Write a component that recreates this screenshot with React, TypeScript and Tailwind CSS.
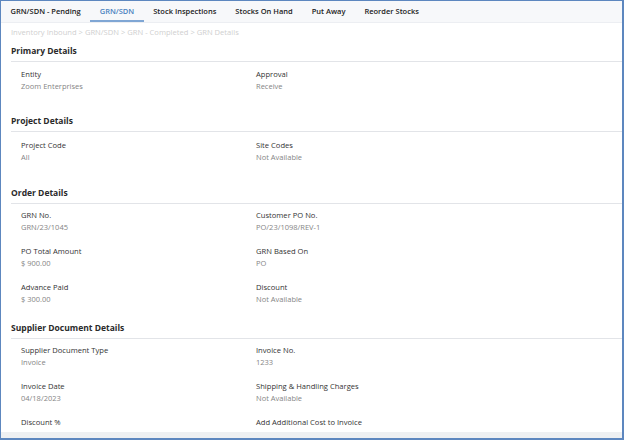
import React from "react";

const tabs = ["GRN/SDN - Pending", "GRN/SDN", "Stock Inspections", "Stocks On Hand", "Put Away", "Reorder Stocks"];

type Field = [string, string];

function Row({ left, right }: { left: Field; right: Field }) {
  return (
    <div className="grid grid-cols-[235px_1fr] pl-[10px]">
      {[left, right].map(([label, value]) => (
        <div key={label} className="flex flex-col">
          <span className="text-[7.6px] leading-[12px] text-[#333]">{label}</span>
          <span className="text-[7.5px] leading-[13px] text-[#858585]">{value}</span>
        </div>
      ))}
    </div>
  );
}

function Section({
  title,
  mt,
  rowsMt,
  rows,
}: {
  title: string;
  mt: string;
  rowsMt: string;
  rows: [Field, Field][];
}) {
  return (
    <div className={mt}>
      <div className="border-b border-[#e2e4e8] pb-[4px] text-[8.5px] font-bold leading-[12px] text-[#2a2a2a]">
        {title}
      </div>
      <div className={`flex flex-col gap-y-[11px] ${rowsMt}`}>
        {rows.map(([l, r]) => (
          <Row key={l[0]} left={l} right={r} />
        ))}
      </div>
    </div>
  );
}

export default function App() {
  return (
    <div className="h-[440px] w-[626px] bg-white font-['Open_Sans',sans-serif]">
      <div className="flex h-[440px] w-[624px] flex-col overflow-hidden border-b-2 border-l border-r-2 border-t border-[#5d87bf]">
        <div className="flex h-[22px] shrink-0 items-stretch border-b border-[#eceef2] bg-[#f7f8fa]">
          {tabs.map((t) => (
            <div
              key={t}
              className={
                t === "GRN/SDN"
                  ? "flex items-center border-b-2 border-[#7fa6d4] px-[9.5px] pt-[2px] text-[7.5px] font-semibold text-[#4a82c0]"
                  : "flex items-center px-[9.5px] text-[7.5px] font-semibold text-[#222]"
              }
            >
              {t}
            </div>
          ))}
        </div>
        <div className="flex-1 overflow-hidden pl-[10px]">
          <div className="mt-[3px] text-[7.6px] leading-[12px] text-[#cfcfcf]">
            Inventory Inbound &gt; GRN/SDN &gt; GRN - Completed &gt; GRN Details
          </div>
          <Section
            title="Primary Details"
            mt="mt-[7px]"
            rowsMt="mt-[6px]"
            rows={[[["Entity", "Zoom Enterprises"], ["Approval", "Receive"]]]}
          />
          <Section
            title="Project Details"
            mt="mt-[22px]"
            rowsMt="mt-[7px]"
            rows={[[["Project Code", "All"], ["Site Codes", "Not Available"]]]}
          />
          <Section
            title="Order Details"
            mt="mt-[23px]"
            rowsMt="mt-[5px]"
            rows={[
              [["GRN No.", "GRN/23/1045"], ["Customer PO No.", "PO/23/1098/REV-1"]],
              [["PO Total Amount", "$ 900.00"], ["GRN Based On", "PO"]],
              [["Advance Paid", "$ 300.00"], ["Discount", "Not Available"]],
            ]}
          />
          <Section
            title="Supplier Document Details"
            mt="mt-[16px]"
            rowsMt="mt-[5px]"
            rows={[
              [["Supplier Document Type", "Invoice"], ["Invoice No.", "1233"]],
              [["Invoice Date", "04/18/2023"], ["Shipping & Handling Charges", "Not Available"]],
              [["Discount %", ""], ["Add Additional Cost to Invoice", ""]],
            ]}
          />
        </div>
        <div className="h-[6px] shrink-0 bg-[#eef0f2]" />
      </div>
    </div>
  );
}
